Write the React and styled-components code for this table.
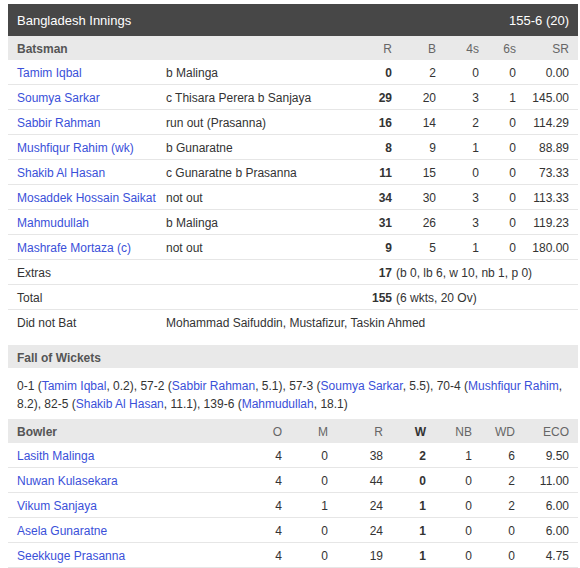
import React from "react";
import styled, { createGlobalStyle } from "styled-components";

const GlobalStyle = createGlobalStyle`
  body {
    margin: 0;
    background: #fff;
    font-family: "Liberation Sans", Arial, sans-serif;
    color: #333;
  }
  * { box-sizing: border-box; }
`;

const LINK = "#3a50d9";
const BAT_COLS = "149px 1fr 40px 44px 43px 37px 53px";
const BOWL_COLS = "1fr 40px 46px 55px 43px 46px 43px 54px";

const Card = styled.div`
  margin: 4px 2px 0 8px;
  font-size: 12px;
`;

const TitleBar = styled.div`
  display: flex;
  justify-content: space-between;
  align-items: center;
  height: 32px;
  padding: 0 9px;
  background: #474747;
  color: #fff;
  font-size: 13px;
`;

const HeadRow = styled.div`
  display: grid;
  grid-template-columns: ${p => p.$cols};
  align-items: center;
  height: 24px;
  padding: 2px 9px 0;
  background: #e9e9e9;
  color: #666;
`;

const Row = styled.div`
  display: grid;
  grid-template-columns: ${p => p.$cols};
  align-items: center;
  height: 25px;
  padding: 2px 9px 0;
  border-bottom: ${p => (p.$last ? "1px solid transparent" : "1px solid #e6e6e6")};
`;

const Label = styled.span`
  font-weight: bold;
  color: #555;
`;

const Num = styled.span`
  text-align: right;
  font-weight: ${p => (p.$bold ? "bold" : "normal")};
  color: ${p => (p.$bold ? "#333" : "inherit")};
`;

const Player = styled.span`
  color: ${LINK};
  white-space: nowrap;
`;

const Cell = styled.span`
  white-space: nowrap;
  grid-column: ${p => p.$span || "auto"};
`;

const Extra = styled.span`
  grid-column: 4 / -1;
  padding-left: 4px;
  white-space: nowrap;
`;

const Section = styled.div`
  margin-top: ${p => p.$gap || 0}px;
`;

const SubHead = styled.div`
  display: flex;
  align-items: center;
  height: 23px;
  padding: 2px 9px 0;
  background: #e9e9e9;
`;

const FowText = styled.p`
  margin: 0;
  padding: 9px 9px 6px;
  line-height: 18px;
`;

const Link = styled.span`
  color: ${LINK};
`;

const batsmen = [
  ["Tamim Iqbal", "b Malinga", 0, 2, 0, 0, "0.00"],
  ["Soumya Sarkar", "c Thisara Perera b Sanjaya", 29, 20, 3, 1, "145.00"],
  ["Sabbir Rahman", "run out (Prasanna)", 16, 14, 2, 0, "114.29"],
  ["Mushfiqur Rahim (wk)", "b Gunaratne", 8, 9, 1, 0, "88.89"],
  ["Shakib Al Hasan", "c Gunaratne b Prasanna", 11, 15, 0, 0, "73.33"],
  ["Mosaddek Hossain Saikat", "not out", 34, 30, 3, 0, "113.33"],
  ["Mahmudullah", "b Malinga", 31, 26, 3, 0, "119.23"],
  ["Mashrafe Mortaza (c)", "not out", 9, 5, 1, 0, "180.00"],
];

const bowlers = [
  ["Lasith Malinga", 4, 0, 38, 2, 1, 6, "9.50"],
  ["Nuwan Kulasekara", 4, 0, 44, 0, 0, 2, "11.00"],
  ["Vikum Sanjaya", 4, 1, 24, 1, 0, 2, "6.00"],
  ["Asela Gunaratne", 4, 0, 24, 1, 0, 0, "6.00"],
  ["Seekkuge Prasanna", 4, 0, 19, 1, 0, 0, "4.75"],
];

const fow = [
  ["0-1", "Tamim Iqbal", "0.2"],
  ["57-2", "Sabbir Rahman", "5.1"],
  ["57-3", "Soumya Sarkar", "5.5"],
  ["70-4", "Mushfiqur Rahim", "8.2"],
  ["82-5", "Shakib Al Hasan", "11.1"],
  ["139-6", "Mahmudullah", "18.1"],
];

export default function App() {
  return (
    <Card>
      <GlobalStyle />
      <TitleBar>
        <span>Bangladesh Innings</span>
        <span>155-6 (20)</span>
      </TitleBar>

      <HeadRow $cols={BAT_COLS}>
        <Label>Batsman</Label>
        <span />
        <Num>R</Num>
        <Num>B</Num>
        <Num>4s</Num>
        <Num>6s</Num>
        <Num>SR</Num>
      </HeadRow>
      {batsmen.map(b => (
        <Row key={b[0]} $cols={BAT_COLS}>
          <Player>{b[0]}</Player>
          <Cell>{b[1]}</Cell>
          <Num $bold>{b[2]}</Num>
          <Num>{b[3]}</Num>
          <Num>{b[4]}</Num>
          <Num>{b[5]}</Num>
          <Num>{b[6]}</Num>
        </Row>
      ))}
      <Row $cols={BAT_COLS}>
        <Cell>Extras</Cell>
        <span />
        <Num $bold>17</Num>
        <Extra>(b 0, lb 6, w 10, nb 1, p 0)</Extra>
      </Row>
      <Row $cols={BAT_COLS}>
        <Cell>Total</Cell>
        <span />
        <Num $bold>155</Num>
        <Extra>(6 wkts, 20 Ov)</Extra>
      </Row>
      <Row $cols={BAT_COLS} $last>
        <Cell>Did not Bat</Cell>
        <Cell $span="2 / -1">Mohammad Saifuddin, Mustafizur, Taskin Ahmed</Cell>
      </Row>

      <Section $gap={10}>
        <SubHead>
          <Label>Fall of Wickets</Label>
        </SubHead>
        <FowText>
          {fow.map((f, i) => (
            <React.Fragment key={f[0]}>
              {f[0]} (<Link>{f[1]}</Link>, {f[2]}){i < fow.length - 1 ? ", " : ""}
            </React.Fragment>
          ))}
        </FowText>
      </Section>

      <HeadRow $cols={BOWL_COLS}>
        <Label>Bowler</Label>
        <Num>O</Num>
        <Num>M</Num>
        <Num>R</Num>
        <Num $bold>W</Num>
        <Num>NB</Num>
        <Num>WD</Num>
        <Num>ECO</Num>
      </HeadRow>
      {bowlers.map(b => (
        <Row key={b[0]} $cols={BOWL_COLS}>
          <Player>{b[0]}</Player>
          <Num>{b[1]}</Num>
          <Num>{b[2]}</Num>
          <Num>{b[3]}</Num>
          <Num $bold>{b[4]}</Num>
          <Num>{b[5]}</Num>
          <Num>{b[6]}</Num>
          <Num>{b[7]}</Num>
        </Row>
      ))}
    </Card>
  );
}
